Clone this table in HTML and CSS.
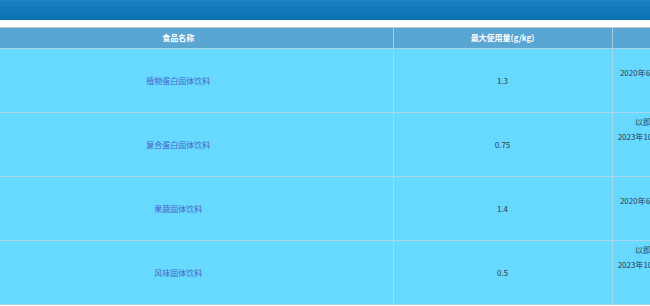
FILE: index.html
```html
<!DOCTYPE html>
<html lang="zh-CN">
<head>
<meta charset="utf-8">
<title>食品添加剂使用量</title>
<link rel="stylesheet" href="styles.css">
</head>
<body>
<div class="page">
  <div class="topbar"></div>
  <div class="spacer"></div>
  <div class="table-wrap">
    <table class="data">
      <colgroup>
        <col class="c-name">
        <col class="c-amount">
        <col class="c-note">
      </colgroup>
      <thead>
        <tr>
          <th>食品名称</th>
          <th>最大使用量(g/kg)</th>
          <th>备注</th>
        </tr>
      </thead>
      <tbody>
        <tr>
          <td class="name">植物蛋白固体饮料</td>
          <td class="num">1.3</td>
          <td class="note">2020年6月国家卫生健康委员会公告批准扩大使用范围</td>
        </tr>
        <tr>
          <td class="name">复合蛋白固体饮料</td>
          <td class="num">0.75</td>
          <td class="note">以即食状态计，按照冲调倍数增加<br>2023年10月国家卫生健康委员会公告批准扩大使用范围<br>试行</td>
        </tr>
        <tr>
          <td class="name">果蔬固体饮料</td>
          <td class="num">1.4</td>
          <td class="note">2020年6月国家卫生健康委员会公告批准扩大使用范围</td>
        </tr>
        <tr>
          <td class="name">风味固体饮料</td>
          <td class="num">0.5</td>
          <td class="note">以即食状态计，按照冲调倍数增加<br>2023年10月国家卫生健康委员会公告批准扩大使用范围<br>试行</td>
        </tr>
      </tbody>
    </table>
  </div>
</div>
</body>
</html>
```

FILE: styles.css
```css
html, body {
  margin: 0;
  padding: 0;
  overflow: hidden;
  background: #ffffff;
}

.page {
  width: 650px;
  height: 306px;
  overflow: hidden;
  font-family: "Microsoft YaHei", "Noto Sans CJK SC", sans-serif;
  font-size: 8px;
}

.topbar {
  height: 20px;
  background: linear-gradient(to bottom, #2a8cc8 0, #1b80c0 1px, #0a72b2 100%);
}

.spacer {
  height: 7px;
  background: #ffffff;
}

.table-wrap {
  margin-left: -36px;
}

.data {
  border-collapse: collapse;
  table-layout: fixed;
  width: 814px;
  border-top: 1px solid #c4cbd1;
}

.c-name { width: 429px; }
.c-amount { width: 219px; }
.c-note { width: 166px; }

.data th {
  height: 20px;
  padding: 0;
  background: #5aa6d2;
  color: #ffffff;
  font-weight: bold;
  text-align: center;
  vertical-align: middle;
  border-left: 1px solid #a7cde0;
  border-right: 1px solid #a7cde0;
  border-bottom: 1px solid #a9d3e6;
  line-height: 20px;
}

.data td {
  height: 63px;
  padding: 0 5px;
  background: #67d9ff;
  text-align: center;
  vertical-align: middle;
  border: 1px solid #a9d6e8;
  border-top: none;
  line-height: 15.4px;
}

.data th:first-child,
.data td:first-child {
  border-left: none;
}

.data td.name {
  color: #4a63c9;
}

.data td.num {
  color: #2f3b44;
}

.data td.note {
  color: #2f3b44;
  word-break: break-all;
}
```
